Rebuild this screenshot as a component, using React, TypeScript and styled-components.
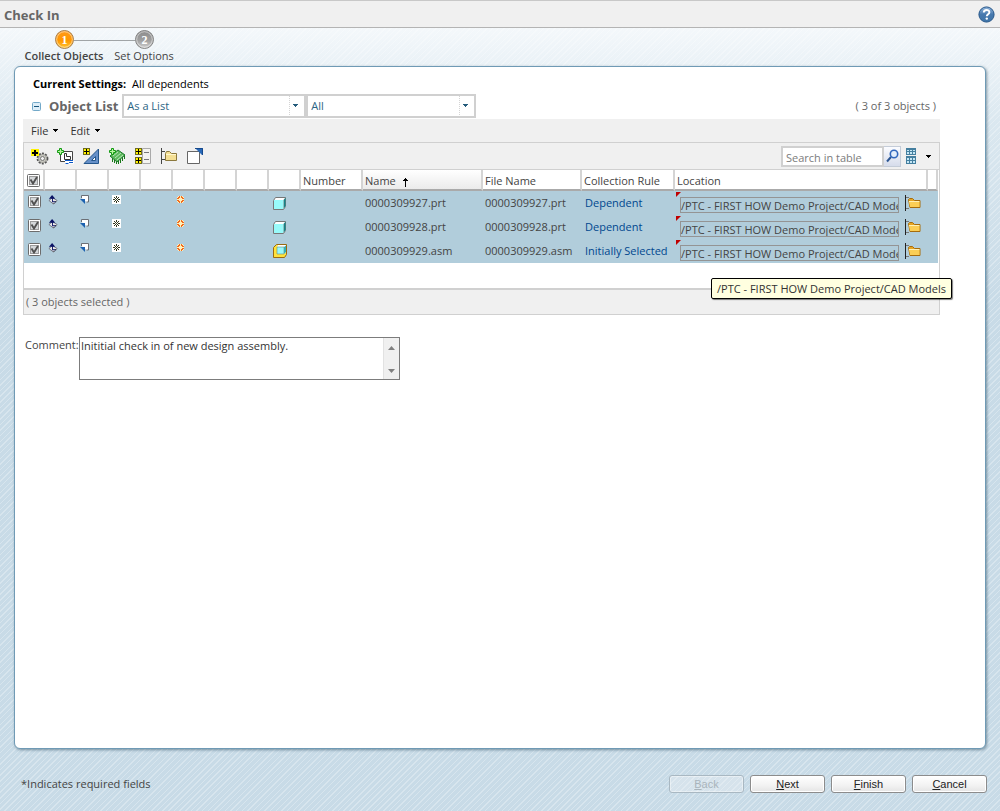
import React from "react";
import styled, { createGlobalStyle, css } from "styled-components";

const GlobalStyle = createGlobalStyle`
  * { box-sizing: border-box; }
  body {
    margin: 0;
    font-family: "Open Sans", "Noto Sans", sans-serif;
    font-size: 11px;
    line-height: 16px;
    color: #444;
  }
  button, input, select, textarea { font: inherit; color: inherit; margin: 0; }
  svg { display: block; flex: none; }
`;

const Page = styled.div`
  min-height: 100vh;
  display: flex;
  flex-direction: column;
  background:
    repeating-linear-gradient(135deg, rgba(255, 255, 255, 0.28) 0 1px, transparent 1px 4px),
    linear-gradient(#f4f8fb 28px, #dbe8f0 120px, #c8dbe7 300px);
`;

const TitleBar = styled.header`
  height: 28px;
  padding: 0 5px 0 4px;
  display: flex;
  align-items: center;
  justify-content: space-between;
  background: #f0f0f0;
  border-top: 1px solid #c8c8c8;
  border-bottom: 1px solid #b4b4b4;
`;

const Title = styled.h1`
  margin: 0;
  padding-top: 2px;
  font-size: 13px;
  line-height: 20px;
  font-weight: 700;
  color: #666;
`;

const IconButton = styled.button`
  padding: 0;
  border: 0;
  background: none;
  display: flex;
`;

const Steps = styled.ol`
  list-style: none;
  margin: 0;
  padding: 1px 0 0 24px;
  height: 38px;
  display: flex;
`;

const Step = styled.li<{ $current?: boolean }>`
  width: 80px;
  display: flex;
  flex-direction: column;
  align-items: center;
  white-space: nowrap;
  font-weight: ${(p) => (p.$current ? 600 : 400)};
  color: #444;
  line-height: 12px;
`;

const Panel = styled.main`
  flex: 1;
  margin: 0 14px;
  padding: 8px 45px 24px 8px;
  background: #fff;
  border: 1px solid #6f9ab5;
  border-radius: 6px;
  box-shadow: 1px 1px 3px rgba(60, 90, 110, 0.6);
`;

const Settings = styled.p`
  margin: 0;
  padding-left: 10px;
  line-height: 18px;
  color: #000;
  display: flex;
  gap: 6px;
`;

const ListHeader = styled.div`
  display: flex;
  align-items: center;
  height: 26px;
  padding-left: 9px;
`;

const ListTitle = styled.h2`
  margin: 0 4px 0 8px;
  font-size: 13px;
  line-height: 26px;
  color: #666;
  white-space: nowrap;
`;

const SelectBox = styled.div<{ $width: number }>`
  display: grid;
  align-items: center;
  width: ${(p) => p.$width}px;
  height: 24px;
  border: 2px solid #d0d0d0;
  background: #fff;
  > * { grid-area: 1 / 1; }
  > svg { justify-self: end; pointer-events: none; }
`;

const Select = styled.select`
  appearance: none;
  width: 100%;
  height: 20px;
  padding: 0 0 0 3px;
  border: 0;
  background: transparent;
  color: #2c6484;
`;

const Count = styled.span<{ $end?: boolean }>`
  margin-left: ${(p) => (p.$end ? "auto" : "0")};
  padding-right: ${(p) => (p.$end ? 4 : 0)}px;
  color: #666;
`;

const Grid = styled.section`
  position: relative;
`;

const MenuBar = styled.nav`
  height: 23px;
  padding: 0 8px;
  display: flex;
  align-items: center;
  gap: 12px;
  background: #f0f0f0;
`;

const MenuButton = styled.button`
  padding: 0;
  border: 0;
  background: none;
  display: flex;
  align-items: center;
  gap: 5px;
  color: #333;
`;

const ToolBar = styled.div`
  height: 27px;
  padding: 0 8px 0 7px;
  display: flex;
  align-items: center;
  gap: 8px;
  background: #f0f0f0;
  border: 1px solid #d0d0d0;
  border-bottom: 0;
`;

const Search = styled.div`
  margin-left: auto;
  margin-right: -3px;
  display: flex;
  align-items: center;
  height: 22px;
`;

const SearchInput = styled.input`
  width: 103px;
  height: 21px;
  padding: 2px 0 0 3px;
  border: 2px solid #d0d0d0;
  background: #fff;
  &::placeholder { color: #7c7c7c; opacity: 1; }
`;

const SearchButton = styled.button`
  width: 17px;
  height: 21px;
  padding: 0;
  display: grid;
  place-items: center;
  border: 1px solid #c4ccd8;
  border-left: 0;
  background: linear-gradient(#fbfcff, #d6dceb);
`;

const TableArea = styled.div`
  border: 1px solid #d0d0d0;
  border-bottom-width: 2px;
  padding: 0 1px 25px 0;
  background: #fff;
`;

const Table = styled.table`
  width: 100%;
  table-layout: fixed;
  border-collapse: separate;
  border-spacing: 0;
`;

const HeadCell = styled.th<{ $sorted?: boolean }>`
  height: 21px;
  padding: 2px 0 0 2px;
  line-height: 15px;
  text-align: left;
  font-weight: 400;
  white-space: nowrap;
  border-right: 2px solid #d4d4d4;
  border-bottom: 2px solid #aaa;
  background: ${(p) => (p.$sorted ? "linear-gradient(#fff, #ebebeb)" : "#fff")};
  > svg { display: inline-block; margin-left: 7px; vertical-align: -2px; }
`;

const Row = styled.tr`
  background: #b1cddb;
`;

const cellBase = css`
  height: 24px;
  padding: 0 0 0 2px;
  vertical-align: middle;
  white-space: nowrap;
  overflow: hidden;
`;

const Cell = styled.td`
  ${cellBase}
`;

const RuleCell = styled.td`
  ${cellBase}
  padding-left: 3px;
  font-weight: 500;
  color: #00478f;
`;

const IconCell = styled.td<{ $top?: boolean }>`
  ${cellBase}
  padding: ${(p) => (p.$top ? "4px 0 0 3px" : "0 0 0 4px")};
  vertical-align: ${(p) => (p.$top ? "top" : "middle")};
`;

const CheckCell = styled.td`
  ${cellBase}
  padding: 0 0 2px 3px;
`;

const CheckLabel = styled.label`
  display: grid;
  width: 14px;
  height: 14px;
  margin-left: 1px;
  > * { grid-area: 1 / 1; pointer-events: none; }
  > input { appearance: none; width: 14px; height: 14px; pointer-events: auto; }
`;

const LocationCell = styled.td`
  ${cellBase}
  padding: 0 6px 0 1px;
`;

const LocationBox = styled.div`
  display: flex;
  align-items: center;
  height: 24px;
  > svg:first-child { align-self: flex-start; margin-top: 1px; }
`;

const LocationInput = styled.input`
  flex: 1;
  min-width: 0;
  height: 16px;
  margin: 4px 5px 0 -1px;
  padding: 1px 0 0 0;
  border: 1px solid #949494;
  background: transparent;
`;

const GridFooter = styled.div`
  height: 25px;
  padding: 0 2px;
  display: flex;
  align-items: center;
  background: #f0f0f0;
  border: 1px solid #d0d0d0;
  border-top: 0;
`;

const Tooltip = styled.div`
  position: absolute;
  right: -12px;
  bottom: 16px;
  padding: 1px 5px;
  line-height: 17px;
  white-space: nowrap;
  color: #333;
  background: #ffffe0;
  border: 1px solid #000;
  border-radius: 2px;
  box-shadow: 1px 1px 1px rgba(0, 0, 0, 0.5);
`;

const CommentRow = styled.div`
  display: flex;
  margin-top: 22px;
  padding-left: 2px;
  > label { width: 54px; line-height: 15px; }
`;

const CommentFrame = styled.div`
  display: flex;
  width: 321px;
  height: 43px;
  border: 1px solid #7c7c7c;
`;

const TextArea = styled.textarea`
  flex: 1;
  padding: 0 1px;
  border: 0;
  resize: none;
  overflow: hidden;
  outline: 0;
  color: #333;
`;

const ScrollTrack = styled.div`
  width: 16px;
  padding: 8px 0 6px;
  display: flex;
  flex-direction: column;
  align-items: center;
  justify-content: space-between;
  background: #f0f0f0;
  border-left: 1px solid #e2e2e2;
`;

const Footer = styled.footer`
  height: 62px;
  padding: 8px 13px 0 21px;
  display: flex;
  align-items: center;
  justify-content: space-between;
`;

const Buttons = styled.div`
  display: flex;
  gap: 6px;
`;

const WizardButton = styled.button`
  width: 75px;
  height: 18px;
  padding: 0;
  font-family: "Liberation Sans", Arial, sans-serif;
  line-height: 14px;
  color: #222;
  border: 1px solid #8c8c8c;
  border-radius: 3px;
  background: linear-gradient(#fff, #f2f2f2 60%, #e4e4e4);
  box-shadow: inset 0 0 0 1px #fff;
  &:disabled {
    color: #a9b4bb;
    border-color: #a9b8c2;
    background: rgba(240, 244, 247, 0.35);
    box-shadow: inset 0 0 0 1px rgba(255, 255, 255, 0.4);
  }
`;

function Caret({ color = "#000" }: { color?: string }) {
  return (
    <svg width="5" height="3" viewBox="0 0 5 3" shapeRendering="crispEdges" aria-hidden="true">
      <path d="M0 0h5v1H4v1H3v1H2V2H1V1H0z" fill={color} />
    </svg>
  );
}

function SelectArrow() {
  return (
    <svg width="16" height="20" viewBox="0 0 16 20" shapeRendering="crispEdges" aria-hidden="true">
      <path d="M1.500 0v20" stroke="#d4d4d4" strokeDasharray="1 1" />
      <path d="M5 8h5v1H9v1H8v1H7v-1H6V9H5z" fill="#245c7c" />
    </svg>
  );
}

function HelpIcon() {
  return (
    <svg width="17" height="17" viewBox="0 0 17 17" aria-hidden="true">
      <defs>
        <linearGradient id="help" x1="0" y1="0" x2="0" y2="1">
          <stop offset="0" stopColor="#8fb3da" />
          <stop offset=".5" stopColor="#4779ae" />
          <stop offset="1" stopColor="#3e74a8" />
        </linearGradient>
      </defs>
      <circle cx="8.5" cy="8.5" r="7.6" fill="url(#help)" stroke="#27578a" strokeWidth="1" />
      <path d="M5.8 6.600c0-3.500 5.600-3.500 5.600-.3 0 2-2.600 2-2.600 4" fill="none" stroke="#fff" strokeWidth="1.900" />
      <circle cx="8.800" cy="12.600" r="1.200" fill="#fff" />
    </svg>
  );
}

function StepMarker({ n, current }: { n: number; current?: boolean }) {
  const id = `step${n}`;
  return (
    <svg width="80" height="21" viewBox="0 0 80 21" aria-hidden="true">
      <defs>
        <linearGradient id={id} x1="0" y1="0" x2="0" y2="1">
          <stop offset="0" stopColor={current ? "#ff9a1c" : "#8a8a8a"} />
          <stop offset=".55" stopColor={current ? "#ff9700" : "#a0a0a0"} />
          <stop offset="1" stopColor={current ? "#ffc531" : "#d0d0d0"} />
        </linearGradient>
      </defs>
      <path d={current ? "M50 11.500H80" : "M0 11.500H31"} stroke="#a0a4a6" />
      <circle cx="40.500" cy="10.500" r="9" fill={`url(#${id})`} stroke={current ? "#a98252" : "#858585"} />
      <circle cx="40.500" cy="10.500" r="7.800" fill="none" stroke="#fff" strokeOpacity=".5" />
      <text x="40.500" y="15" textAnchor="middle" fontFamily="Liberation Serif, serif" fontWeight="700" fontSize="12" fill="#fff">{n}</text>
    </svg>
  );
}

function CollapseIcon() {
  return (
    <svg width="9" height="9" viewBox="0 0 9 9" aria-hidden="true">
      <rect x=".5" y=".5" width="8" height="8" rx="1" fill="#dcedf8" stroke="#73a9c9" />
      <path d="M2 4.500h5" stroke="#17557c" />
    </svg>
  );
}

function PlusTile({ x, y }: { x: number; y: number }) {
  return (
    <g transform={`translate(${x} ${y})`}>
      <path d="M0 0h7v7H0z" fill="#6f6c20" />
      <path d="M1 1h5v5H1z" fill="#fff200" />
      <path d="M3 1h1v5H3zM1 3h5v1H1z" fill="#000" />
    </g>
  );
}

function GreenPlus() {
  return <path d="M2.500.5h2v2h2v2h-2v2h-2v-2h-2v-2h2z" fill="#b9f5a0" stroke="#109a10" />;
}

const TOOL_ICONS: Record<string, React.ReactNode> = {
  "Add related objects": (
    <>
      <circle cx="11.500" cy="10.500" r="5" fill="#c9c9c0" stroke="#555" strokeWidth="1.800" strokeDasharray="2 1.200" />
      <circle cx="11.500" cy="10.500" r="4" fill="#c9c9c0" stroke="#888" strokeWidth=".5" />
      <circle cx="11.500" cy="10.500" r="2" fill="#f2f2f2" stroke="#777" />
      <path d="M0 1h8v7H0z" fill="#fff200" />
      <path d="M3 2h2v2h2v2H5v2H3V6H1V4h2z" fill="#000" />
    </>
  ),
  "Add part": (
    <>
      <path d="M3.500 3.500h12v10h-12z" fill="#fff" stroke="#444" />
      <path d="M7.500 5.500h2v3h4v3h-6z" fill="#fff" stroke="#333" />
      <GreenPlus />
      <path d="M8 12h9v4H8z" fill="#fff" />
      <path d="M8 12.500h8M8.500 15.500h3M12 14.500h4" stroke="#0b56c4" />
    </>
  ),
  "Add drawing": (
    <>
      <path d="M15.500 1v14.500H1z" fill="#6690c8" stroke="#24568c" />
      <path d="M12.500 8.500v4h-4z" fill="#fff" stroke="#24568c" />
      <PlusTile x={0} y={0} />
    </>
  ),
  "Add component": (
    <>
      <path d="M3.500 14V9M5.500 15v-4M7.500 16v-4M9.500 16v-4M11.500 15v-4M13.500 13V9M15.500 11V7" stroke="#187818" />
      <path d="M1 8l8-6 7 5-8 7z" fill="#5cb85c" stroke="#1c7b2c" />
      <path d="M4 8l5-4M6 10l6-5M8 12l6-5" stroke="#b8e8b8" />
      <GreenPlus />
    </>
  ),
  "Add baseline": (
    <>
      <path d="M7.500.5h8v15h-8z" fill="#f4f4f0" stroke="#aaa" />
      <path d="M9 4.500h5M9 11.500h5" stroke="#777" />
      <PlusTile x={0} y={0} />
      <PlusTile x={0} y={9} />
    </>
  ),
  "Set location": (
    <>
      <path d="M.5 0v16M1 3.500h3M1 11.500h3" stroke="#444" />
      <path d="M4.500 5.500l1-2h3l2 2h5v7h-11z" fill="#f4df94" stroke="#8b783c" />
      <path d="M5 6.500h10" stroke="#fff7cf" />
    </>
  ),
  "New window": (
    <>
      <path d="M.5 3.500h12v12H.5z" fill="#fff" stroke="#666" />
      <path d="M8 0h8v7h-1z" fill="#2868b8" />
      <path d="M8 .5h7.500V7" fill="none" stroke="#16498c" />
    </>
  ),
};

function ToolIcon({ name }: { name: string }) {
  return (
    <svg width="18" height="17" viewBox="0 0 18 17" aria-hidden="true">
      {TOOL_ICONS[name]}
    </svg>
  );
}

function SearchIcon() {
  return (
    <svg width="13" height="14" viewBox="0 0 13 14" aria-hidden="true">
      <path d="M1 12.500l4-4.500" stroke="#2c5693" strokeWidth="2" />
      <circle cx="8" cy="5" r="3.700" fill="#e3eefc" stroke="#3268bd" strokeWidth="1.600" />
    </svg>
  );
}

function ViewIcon() {
  return (
    <svg width="10" height="16" viewBox="0 0 10 16" shapeRendering="crispEdges" aria-hidden="true">
      <path d="M0 0h10v7H0zM0 8h10v8H0z" fill="#447f9f" />
      <path
        d="M1 2h2v1H1zM4 2h2v1H4zM7 2h2v1H7zM1 4h2v2H1zM4 4h2v2H4zM7 4h2v2H7zM1 10h2v2H1zM4 10h2v2H4zM7 10h2v2H7zM1 13h2v2H1zM4 13h2v2H4zM7 13h2v2H7z"
        fill="#c4e6f5"
      />
    </svg>
  );
}

function CheckBox({ label }: { label: string }) {
  return (
    <CheckLabel>
      <input type="checkbox" defaultChecked aria-label={label} />
      <svg width="13" height="13" viewBox="0 0 13 13" aria-hidden="true">
        <rect x=".5" y=".5" width="12" height="12" rx="1" fill="#fff" stroke="#6c6c6c" />
        <rect x="2.500" y="2.500" width="8" height="8" fill="#d4d7d9" stroke="#9c9c9c" />
        <path d="M3.500 5.500l2.500 4L10 3" fill="none" stroke="#505050" strokeWidth="1.900" />
      </svg>
    </CheckLabel>
  );
}

function CheckOutIcon() {
  return (
    <svg width="10" height="10" viewBox="0 0 11 11" aria-hidden="true">
      <path d="M1 6l4-3 5 3-4 4z" fill="#e8e8e8" stroke="#556" strokeWidth=".8" />
      <path d="M4.500 0L8 4H5.500v3h3v1h-4V4H1z" fill="#0a1264" />
      <path d="M6 9h1v1H6zM8 7h1v1H8z" fill="#222" />
    </svg>
  );
}

function ShareIcon() {
  return (
    <svg width="10" height="10" viewBox="0 0 10 10" aria-hidden="true">
      <path d="M1.500 3V.5h7V7H6.500" fill="#fff" stroke="#6b6f75" />
      <path d="M2 1h6v5H6z" fill="#fff" />
      <path d="M0 4h5v5z" fill="#1d62b0" />
    </svg>
  );
}

function NewIcon({ warm }: { warm?: boolean }) {
  return (
    <svg width="9" height="9" viewBox="0 0 9 9" shapeRendering="crispEdges" aria-hidden="true">
      <path d={warm ? "M2 1h5v1h1v5H7v1H2V7H1V2h1z" : "M0 0h9v9H0z"} fill={warm ? "#fff0b8" : "#fff"} />
      <path
        d={
          warm
            ? "M3 1h1v2H3zM5 1h1v2H5zM3 6h1v2H3zM5 6h1v2H5zM1 3h2v1H1zM1 5h2v1H1zM6 3h2v1H6zM6 5h2v1H6zM2 2h1v1H2zM6 2h1v1H6zM2 6h1v1H2zM6 6h1v1H6z"
            : "M4 1h1v2H4zM4 6h1v2H4zM1 4h2v1H1zM6 4h2v1H6zM2 2h1v1H2zM6 2h1v1H6zM2 6h1v1H2zM6 6h1v1H6zM4 4h1v1H4zM3 3h1v1H3zM5 3h1v1H5zM3 5h1v1H3zM5 5h1v1H5z"
        }
        fill={warm ? "#f06a20" : "#34391f"}
      />
    </svg>
  );
}

function PartIcon() {
  return (
    <svg width="14" height="13" viewBox="0 0 14 13" aria-hidden="true">
      <path d="M.5 3.500l2-3h10v9l-2 3H.5z" fill="#fff" stroke="#777" />
      <path d="M10.500 3v9l2-3V.5z" fill="#168488" />
      <path d="M1 3h9v9H1z" fill="#98fafa" />
    </svg>
  );
}

function AssemblyIcon() {
  return (
    <svg width="14" height="14" viewBox="0 0 14 14" aria-hidden="true">
      <path d="M.5 3.500l3-3h10v10l-2 3H.5z" fill="#ffe23a" stroke="#9a6a10" />
      <path d="M4 3l1-2h8v7l-2 2H4z" fill="#fff" />
      <path d="M4 3h7v7H4z" fill="#98fafa" stroke="#6c8a7a" strokeWidth=".6" />
      <path d="M11 3l2-1.500V8l-2 2z" fill="#38aeb4" />
    </svg>
  );
}

function FolderIcon() {
  return (
    <svg width="18" height="16" viewBox="0 0 18 16" aria-hidden="true">
      <path d="M1.500 0v16" stroke="#222" />
      <path d="M2 2.500h3M2 13.500h3" stroke="#777" />
      <path d="M4.500 4.500l1-1h3l2 2h5.500v7H6z" fill="#e5a422" stroke="#a66c0c" />
      <path d="M5 7h10.500v5H6z" fill="#fbce55" />
      <path d="M5 6.500h10.500" stroke="#fff0b4" />
    </svg>
  );
}

function ScrollArrow({ up }: { up?: boolean }) {
  return (
    <svg width="7" height="4" viewBox="0 0 7 4" aria-hidden="true">
      <path d={up ? "M0 4l3.500-4L7 4z" : "M0 0h7L3.500 4z"} fill="#808080" />
    </svg>
  );
}

const LOCATION = "/PTC - FIRST HOW Demo Project/CAD Models";

const OBJECTS = [
  { name: "0000309927.prt", rule: "Dependent", kind: "part" },
  { name: "0000309928.prt", rule: "Dependent", kind: "part" },
  { name: "0000309929.asm", rule: "Initially Selected", kind: "assembly" },
];

export default function App() {
  return (
    <>
      <GlobalStyle />
      <Page>
        <TitleBar>
          <Title>Check In</Title>
          <IconButton type="button" aria-label="Help"><HelpIcon /></IconButton>
        </TitleBar>

        <Steps>
          <Step $current aria-current="step"><StepMarker n={1} current />Collect Objects</Step>
          <Step><StepMarker n={2} />Set Options</Step>
        </Steps>

        <Panel>
          <Settings><b>Current Settings:</b><span>All dependents</span></Settings>
          <ListHeader>
            <IconButton type="button" aria-label="Collapse"><CollapseIcon /></IconButton>
            <ListTitle>Object List</ListTitle>
            <SelectBox $width={184}>
              <Select aria-label="View"><option>As a List</option></Select>
              <SelectArrow />
            </SelectBox>
            <SelectBox $width={170}>
              <Select aria-label="Filter"><option>All</option></Select>
              <SelectArrow />
            </SelectBox>
            <Count $end>( 3 of 3 objects )</Count>
          </ListHeader>

          <Grid>
            <MenuBar>
              <MenuButton type="button">File<Caret /></MenuButton>
              <MenuButton type="button">Edit<Caret /></MenuButton>
            </MenuBar>
            <ToolBar>
              {Object.keys(TOOL_ICONS).map((name) => (
                <IconButton key={name} type="button" aria-label={name}><ToolIcon name={name} /></IconButton>
              ))}
              <Search>
                <SearchInput type="text" placeholder="Search in table" aria-label="Search in table" />
                <SearchButton type="button" aria-label="Search"><SearchIcon /></SearchButton>
              </Search>
              <MenuButton type="button" aria-label="Table view"><ViewIcon /><span /><Caret /></MenuButton>
            </ToolBar>
            <TableArea>
              <Table>
                <colgroup>
                  <col width="21" />
                  {Array.from({ length: 8 }, (_, i) => <col key={i} width="32" />)}
                  <col width="62" />
                  <col width="120" />
                  <col width="99" />
                  <col width="93" />
                  <col />
                  <col width="10" />
                </colgroup>
                <thead>
                  <tr>
                    <HeadCell><CheckBox label="Select all" /></HeadCell>
                    {Array.from({ length: 8 }, (_, i) => <HeadCell key={i} />)}
                    <HeadCell>Number</HeadCell>
                    <HeadCell $sorted aria-sort="ascending">
                      Name
                      <svg width="5" height="9" viewBox="0 0 5 9" shapeRendering="crispEdges" aria-hidden="true">
                        <path d="M2 0h1v1h1v1h1v1H3v6H2V3H0V2h1V1h1z" fill="#000" />
                      </svg>
                    </HeadCell>
                    <HeadCell>File Name</HeadCell>
                    <HeadCell>Collection Rule</HeadCell>
                    <HeadCell>Location</HeadCell>
                    <HeadCell />
                  </tr>
                </thead>
                <tbody>
                  {OBJECTS.map((o) => (
                    <Row key={o.name}>
                      <CheckCell><CheckBox label={`Select ${o.name}`} /></CheckCell>
                      <IconCell $top><CheckOutIcon /></IconCell>
                      <IconCell $top><ShareIcon /></IconCell>
                      <IconCell $top><NewIcon /></IconCell>
                      <IconCell />
                      <IconCell $top><NewIcon warm /></IconCell>
                      <IconCell />
                      <IconCell />
                      <IconCell>{o.kind === "part" ? <PartIcon /> : <AssemblyIcon />}</IconCell>
                      <Cell />
                      <Cell>{o.name}</Cell>
                      <Cell>{o.name}</Cell>
                      <RuleCell>{o.rule}</RuleCell>
                      <LocationCell>
                        <LocationBox>
                          <svg width="5" height="5" viewBox="0 0 5 5" aria-hidden="true">
                            <path d="M0 0h5L0 5z" fill="#c00000" />
                          </svg>
                          <LocationInput readOnly value={LOCATION} aria-label={`Location of ${o.name}`} />
                          <IconButton type="button" aria-label="Choose folder"><FolderIcon /></IconButton>
                        </LocationBox>
                      </LocationCell>
                      <Cell />
                    </Row>
                  ))}
                </tbody>
              </Table>
            </TableArea>
            <GridFooter><Count>( 3 objects selected )</Count></GridFooter>
            <Tooltip role="tooltip">{LOCATION}</Tooltip>
          </Grid>

          <CommentRow>
            <label htmlFor="comment">Comment:</label>
            <CommentFrame>
              <TextArea id="comment" defaultValue="Inititial check in of new design assembly." />
              <ScrollTrack><ScrollArrow up /><ScrollArrow /></ScrollTrack>
            </CommentFrame>
          </CommentRow>
        </Panel>

        <Footer>
          <span>*Indicates required fields</span>
          <Buttons>
            <WizardButton type="button" disabled><u>B</u>ack</WizardButton>
            <WizardButton type="button"><u>N</u>ext</WizardButton>
            <WizardButton type="button"><u>F</u>inish</WizardButton>
            <WizardButton type="button"><u>C</u>ancel</WizardButton>
          </Buttons>
        </Footer>
      </Page>
    </>
  );
}
